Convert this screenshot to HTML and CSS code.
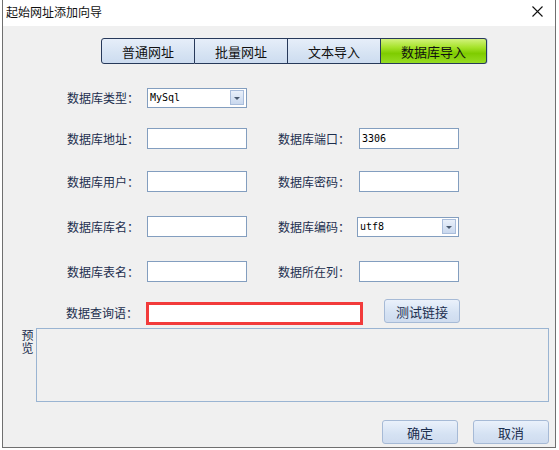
FILE: index.html
```html
<!DOCTYPE html>
<html>
<head>
<meta charset="utf-8">
<link rel="stylesheet" href="styles.css">
</head>
<body>
<div class="window">
  <div class="titlebar">
    <span class="title">起始网址添加向导</span>
    <svg class="close" width="11" height="11" viewBox="0 0 11 11"><path d="M0.5 0.5L10.5 10.5M10.5 0.5L0.5 10.5" stroke="#111" stroke-width="1.1" fill="none"/></svg>
  </div>
  <div class="content">
    <div class="tabs">
      <div class="tab first">普通网址</div>
      <div class="tab">批量网址</div>
      <div class="tab">文本导入</div>
      <div class="tab active">数据库导入</div>
    </div>

    <div class="row r1">
      <span class="label">数据库类型：</span>
      <div class="select"><span class="val">MySql</span><span class="drop"><i></i></span></div>
    </div>
    <div class="row r2">
      <span class="label">数据库地址：</span>
      <div class="input"></div>
      <span class="label label2">数据库端口：</span>
      <div class="input"><span class="val">3306</span></div>
    </div>
    <div class="row r3">
      <span class="label">数据库用户：</span>
      <div class="input"></div>
      <span class="label label2">数据库密码：</span>
      <div class="input"></div>
    </div>
    <div class="row r4">
      <span class="label">数据库库名：</span>
      <div class="input"></div>
      <span class="label label2 narrow">数据库编码：</span>
      <div class="select wide"><span class="val">utf8</span><span class="drop"><i></i></span></div>
    </div>
    <div class="row r5">
      <span class="label">数据库表名：</span>
      <div class="input"></div>
      <span class="label label2">数据所在列：</span>
      <div class="input"></div>
    </div>
    <div class="row query">
      <span class="label qlabel">数据查询语：</span>
      <div class="redinput"></div>
      <div class="btn test">测试链接</div>
    </div>
    <div class="preview">
      <div class="plabel">预览</div>
      <div class="pbox"></div>
    </div>
    <div class="actions">
      <div class="btn act">确定</div>
      <div class="btn act">取消</div>
    </div>
  </div>
</div>
</body>
</html>
```

FILE: styles.css
```css
html, body {
  margin: 0;
  padding: 0;
  background: #ffffff;
  width: 559px;
  height: 450px;
  overflow: hidden;
}
body {
  font-family: "Noto Sans CJK SC", "Noto Sans", sans-serif;
  font-size: 12px;
}
.window {
  margin-left: 2px;
  width: 552px;
  height: 447px;
  border: 1px solid #6f6f6f;
  border-top: none;
  display: flex;
  flex-direction: column;
}
.titlebar {
  height: 26px;
  background: #ffffff;
  display: flex;
  align-items: center;
  justify-content: space-between;
  padding: 0 12px 0 3px;
  box-sizing: border-box;
}
.title {
  color: #111;
  font-size: 12px;
  line-height: 14px;
  margin-top: -2px;
}
.close {
  margin-top: -4px;
}
.content {
  flex: 1;
  background: #f0f0f0;
  display: flex;
  flex-direction: column;
}
.tabs {
  display: flex;
  margin: 12px 0 0 98px;
  height: 26px;
}
.tab {
  width: 93px;
  height: 26px;
  box-sizing: border-box;
  border: 1px solid #27395a;
  border-left: none;
  background: linear-gradient(#e6eef9, #d6e3f3 60%, #cddcf0);
  color: #111;
  font-size: 13px;
  display: flex;
  align-items: center;
  justify-content: center;
}
.tab.first {
  border-left: 1px solid #27395a;
  border-radius: 3px 0 0 3px;
  width: 94px;
}
.tab.active {
  width: 106px;
  background: linear-gradient(#d2f27c, #a6e32a 35%, #7fcc00 60%, #96dc22);
  border-radius: 0 3px 3px 0;
  box-shadow: 1px 0 0 #c8d6ea;
}
.row {
  display: flex;
  align-items: center;
  height: 21px;
  padding-left: 64px;
}
.r1 { margin-top: 23px; }
.r2 { margin-top: 20px; }
.r3 { margin-top: 22px; }
.r4 { margin-top: 24px; }
.r5 { margin-top: 24px; }
.label {
  width: 80px;
  color: #1c2e4e;
  font-size: 12px;
  white-space: nowrap;
}
.label2 {
  margin-left: 31px;
  width: 81px;
}
.label2.narrow {
  width: 79px;
}
.input, .select {
  width: 100px;
  height: 21px;
  box-sizing: border-box;
  background: #fff;
  border: 1px solid #839ebf;
  display: flex;
  align-items: center;
}
.select {
  height: 20px;
  justify-content: space-between;
}
.select.wide {
  width: 102px;
}
.val {
  font-family: "DejaVu Sans Mono", "Liberation Mono", monospace;
  font-size: 10px;
  color: #000;
  padding-left: 2px;
}
.drop {
  width: 14px;
  height: 15px;
  margin-right: 2px;
  box-sizing: border-box;
  border: 1px solid #a9bddb;
  background: linear-gradient(#e9f0fa, #c9d8ee);
  display: flex;
  align-items: center;
  justify-content: center;
}
.drop i {
  width: 0;
  height: 0;
  border-left: 3px solid transparent;
  border-right: 3px solid transparent;
  border-top: 3px solid #4a5a70;
  margin-top: 2px;
}
.query {
  margin-top: 17px;
  height: 26px;
  align-items: flex-start;
  padding-left: 63px;
}
.qlabel {
  margin-top: 5px;
}
.redinput {
  width: 217px;
  height: 23px;
  margin-top: 3px;
  box-sizing: border-box;
  background: #fff;
  border: 3px solid #f23b3b;
}
.btn {
  box-sizing: border-box;
  border: 1px solid #a6bad6;
  border-radius: 3px;
  background: linear-gradient(#eaf1fb, #d5e2f3 60%, #cfdcef);
  color: #1c2e4e;
  font-size: 13px;
  display: flex;
  align-items: center;
  justify-content: center;
}
.test {
  width: 76px;
  height: 24px;
  margin-left: 21px;
}
.preview {
  display: flex;
  margin-top: 3px;
  padding-left: 17px;
}
.plabel {
  width: 15px;
  writing-mode: vertical-rl;
  text-orientation: upright;
  letter-spacing: 1px;
  color: #1c2e4e;
  font-size: 12px;
  line-height: 15px;
  margin-top: 1px;
  margin-right: 1px;
  height: 30px;
}
.pbox {
  width: 513px;
  height: 74px;
  box-sizing: border-box;
  border: 1px solid #9ab4d2;
}
.actions {
  display: flex;
  margin-top: 18px;
  padding-left: 379px;
  gap: 15px;
}
.act {
  width: 76px;
  height: 24px;
}
```
